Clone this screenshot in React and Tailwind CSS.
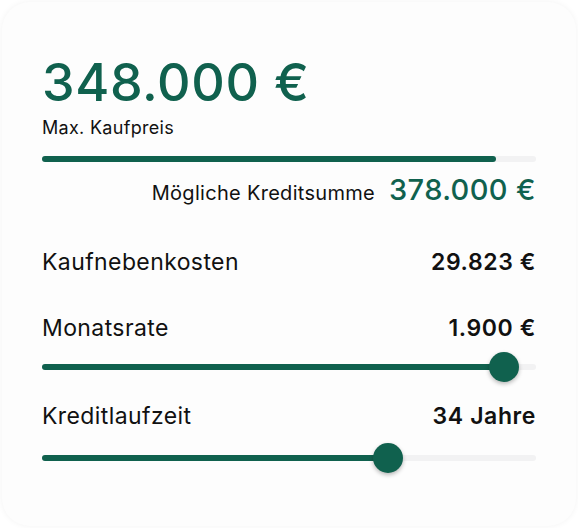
function Slider({ pct }) {
  return (
    <div className="relative h-[30px] flex items-center">
      <div className="w-full h-[6px] rounded-full bg-[#f2f2f3]">
        <div className="h-full rounded-full bg-[#10614e]" style={{ width: `${pct}%` }} />
      </div>
      <div
        className="absolute top-0 w-[30px] h-[30px] -ml-[15px] rounded-full bg-[#10614e] shadow-[0_2px_4px_rgba(0,0,0,0.28)]"
        style={{ left: `${pct}%` }}
      />
    </div>
  );
}

function Row({ label, value }) {
  return (
    <div className="flex items-baseline justify-between leading-none">
      <span className="text-[23px] tracking-[0.4px]">{label}</span>
      <span className="text-[23px] font-semibold tracking-[0.6px]">{value}</span>
    </div>
  );
}

export default function App() {
  return (
    <div className="w-[578px] h-[528px] bg-white p-[2px] font-['Inter',sans-serif] text-[#111]">
      <div className="h-full rounded-[28px] bg-[#fdfdfd] shadow-[0_0_6px_rgba(0,0,0,0.05)] px-[40px] pt-[55px]">
        <div className="text-[52px] leading-none font-medium tracking-[0.6px] text-[#10614e]">
          348.000 €
        </div>
        <div className="mt-[10px] text-[18px] leading-none tracking-[0.3px]">Max. Kaufpreis</div>
        <div className="mt-[19px] h-[6px] rounded-full bg-[#f2f2f3]">
          <div className="h-full w-[92%] rounded-full bg-[#10614e]" />
        </div>
        <div className="mt-[13px] flex items-baseline justify-end gap-[14px] leading-none">
          <span className="text-[20px] tracking-[0.3px]">Mögliche Kreditsumme</span>
          <span className="text-[29px] font-medium tracking-[0.4px] text-[#10614e]">378.000 €</span>
        </div>

        <div className="mt-[47px]">
          <Row label="Kaufnebenkosten" value="29.823 €" />
        </div>

        <div className="mt-[43px]">
          <Row label="Monatsrate" value="1.900 €" />
        </div>
        <div className="mt-[12px]">
          <Slider pct={93.5} />
        </div>

        <div className="mt-[23px]">
          <Row label="Kreditlaufzeit" value="34 Jahre" />
        </div>
        <div className="mt-[15px]">
          <Slider pct={70} />
        </div>
      </div>
    </div>
  );
}
